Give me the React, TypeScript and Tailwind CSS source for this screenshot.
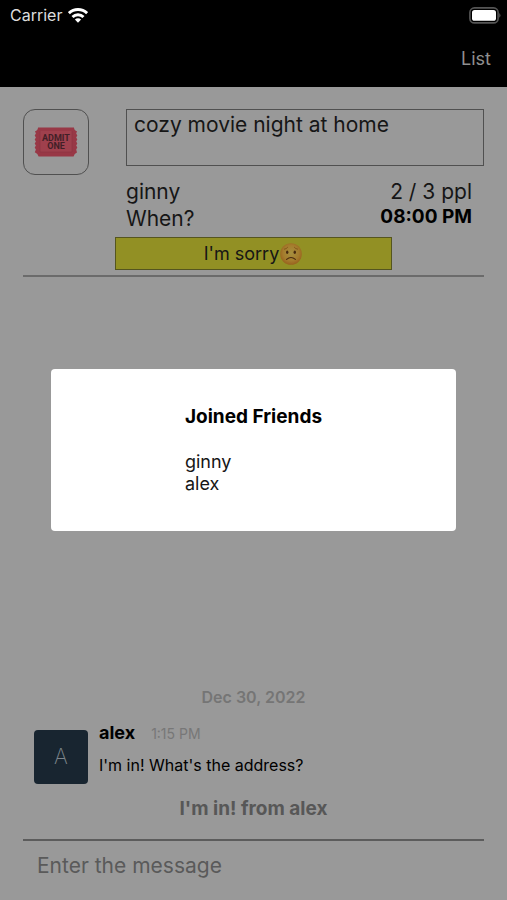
import { useState } from "react";

const friends = ["ginny", "alex"];

const messages = [
  { id: 1, name: "alex", time: "1:15 PM", text: "I'm in! What's the address?" },
];

const WifiIcon = () => (
  <svg viewBox="0 0 20 15" className="h-[15px] w-5" aria-label="Wi-Fi">
    <g fill="none" stroke="#fff" strokeWidth="2.9">
      <path d="M0.9 5.2a13 13 0 0 1 18.2 0" />
      <path d="M4.5 9a7.8 7.8 0 0 1 11 0" />
    </g>
    <path d="M10 14.8L6.9 11.6a4.4 4.4 0 0 1 6.2 0z" fill="#fff" />
  </svg>
);

const BatteryIcon = () => (
  <svg viewBox="0 0 34 17" className="h-[17px] w-[34px]" aria-label="Battery">
    <rect x="2.9" y="0.9" width="28.2" height="15" rx="4.5" fill="#000" stroke="#555" strokeWidth="1.6" />
    <rect x="5" y="3" width="24" height="10.8" rx="2.6" fill="#fff" />
    <path d="M32.4 6q2 2.4 0 4.8z" fill="#666" />
  </svg>
);

const TicketIcon = () => (
  <svg viewBox="0 0 44 30" className="h-[30px] w-11" aria-hidden="true">
    <path
      d="M4 0.5H40Q40.2 3.6 43 4.2L42.2 6.5L43.3 8.5L42.2 10.5L43.3 12.5L42.2 14.5L43.3 16.5L42.2 18.5L43.3 20.5L42.2 22.5L43 25.4Q40.2 26.4 39.6 29.5H4.6Q4 26.4 0.8 25.2L1.9 22.5L0.7 20.5L1.9 18.5L0.7 16.5L1.9 14.5L0.7 12.5L1.9 10.5L0.7 8.5L1.9 6.5L1 4.2Q3.8 3.6 4 0.5Z"
      fill="#983846"
    />
    <rect x="6" y="4" width="32" height="21" fill="#9f404d" />
    <path d="M6 4V25H38V4" fill="none" stroke="#8c3442" strokeWidth="0.6" />
    <g
      fill="#421f27"
      fontSize="9"
      fontWeight="700"
      textAnchor="middle"
      className="font-['Liberation_Sans_Narrow',Roboto,sans-serif]"
    >
      <text x="22" y="13.6">ADMIT</text>
      <text x="22" y="22.4">ONE</text>
    </g>
  </svg>
);

const SadFace = () => (
  <svg viewBox="0 0 24 24" className="size-6" aria-hidden="true">
    <defs>
      <radialGradient id="face" cx="0.5" cy="0.45" r="0.56">
        <stop offset="0" stopColor="#a6903f" />
        <stop offset="0.65" stopColor="#a57c2d" />
        <stop offset="1" stopColor="#98601d" />
      </radialGradient>
    </defs>
    <circle cx="12" cy="12" r="10.8" fill="url(#face)" />
    <ellipse cx="8.2" cy="10.2" rx="1.2" ry="1.7" fill="#47290f" />
    <ellipse cx="15.8" cy="10.2" rx="1.2" ry="1.7" fill="#47290f" />
    <path d="M7.6 17.4Q12 13.6 16.4 17.4" fill="none" stroke="#47290f" strokeWidth="1.1" strokeLinecap="round" />
    <path d="M5.4 7.2Q7.4 7 8.6 5.4M18.6 7.2Q16.6 7 15.4 5.4" fill="none" stroke="#7b4b17" strokeWidth="0.8" strokeLinecap="round" />
  </svg>
);

const App = () => {
  const [title, setTitle] = useState("cozy movie night at home");
  const [draft, setDraft] = useState("");

  return (
    <div className="flex min-h-screen flex-col bg-[#999] font-[Inter,sans-serif] text-[#161616]">
      <header className="bg-black">
        <div className="flex h-[30px] items-center justify-between pr-[6px] pl-[10px]">
          <div className="flex items-center gap-[6px] text-base text-[#ddd]">
            Carrier
            <WifiIcon />
          </div>
          <BatteryIcon />
        </div>
        <nav className="flex h-[57px] items-center justify-end px-4">
          <a href="#list" className="text-lg text-[#8f8f8f]">
            List
          </a>
        </nav>
      </header>

      <section className="mx-[23px] flex flex-col border-b-2 border-[#6b6b6b] pt-[22px] pb-[5px]">
        <div className="flex gap-[37px]">
          <div className="flex size-[66px] shrink-0 items-center justify-center rounded-xl border border-[#505050]">
            <TicketIcon />
          </div>
          <div className="min-w-0 flex-1">
            <textarea
              aria-label="Title"
              value={title}
              onChange={(e) => setTitle(e.target.value)}
              className="block h-[57px] w-full resize-none border border-[#505050] px-[7px] py-px text-[21px] leading-7 outline-none"
            />
            <div className="mt-3 flex justify-between pr-3 text-[21px]">
              <div>
                <p className="leading-[27px]">ginny</p>
                <p className="leading-[27px]">When?</p>
              </div>
              <div className="text-right">
                <p className="leading-[27px]">2 / 3 ppl</p>
                <p className="text-[19px] leading-6 font-bold text-black">08:00 PM</p>
              </div>
            </div>
          </div>
        </div>
        <button
          type="button"
          className="mt-[5px] flex h-[33px] w-3/5 items-center justify-center self-center border border-[#55551f] bg-[#929024] text-lg"
        >
          I'm sorry
          <SadFace />
        </button>
      </section>

      <main className="flex flex-1 flex-col justify-end">
        <p className="text-center text-base leading-6 font-semibold text-[#757575]">Dec 30, 2022</p>
        {messages.map((message) => (
          <article key={message.id} className="mt-3 flex gap-[11px] px-[34px]">
            <div className="mt-[9px] flex size-[54px] shrink-0 items-center justify-center rounded-[4px] bg-[#182530] text-[21px] font-extralight text-[#7d858b]">
              {message.name[0].toUpperCase()}
            </div>
            <div>
              <div className="flex items-baseline gap-4">
                <h2 className="text-lg leading-6 font-bold text-black">{message.name}</h2>
                <time className="text-sm text-[#777]">{message.time}</time>
              </div>
              <p className="mt-2 text-base leading-6 text-black">{message.text}</p>
            </div>
          </article>
        ))}
        <p className="mt-[13px] mb-[18px] text-center text-[19px] leading-6 font-bold text-[#575757]">
          I'm in! from alex
        </p>
      </main>

      <footer className="mx-[23px] h-[61px] border-t-2 border-[#5c5c5c]">
        <input
          type="text"
          aria-label="Message"
          placeholder="Enter the message"
          value={draft}
          onChange={(e) => setDraft(e.target.value)}
          className="h-12 w-full px-[14px] text-[21px] outline-none placeholder:text-[#5a5a5a]"
        />
      </footer>

      <div className="fixed inset-0 flex items-center justify-center px-[51px]">
        <div
          role="dialog"
          aria-labelledby="joined-title"
          className="flex w-full justify-center rounded-[4px] bg-white py-9"
        >
          <div>
            <h1 id="joined-title" className="text-[19px] leading-6 font-bold text-black">
              Joined Friends
            </h1>
            <ul className="mt-[22px] text-lg leading-[22px]">
              {friends.map((friend) => (
                <li key={friend}>{friend}</li>
              ))}
            </ul>
          </div>
        </div>
      </div>
    </div>
  );
};

export default App;
